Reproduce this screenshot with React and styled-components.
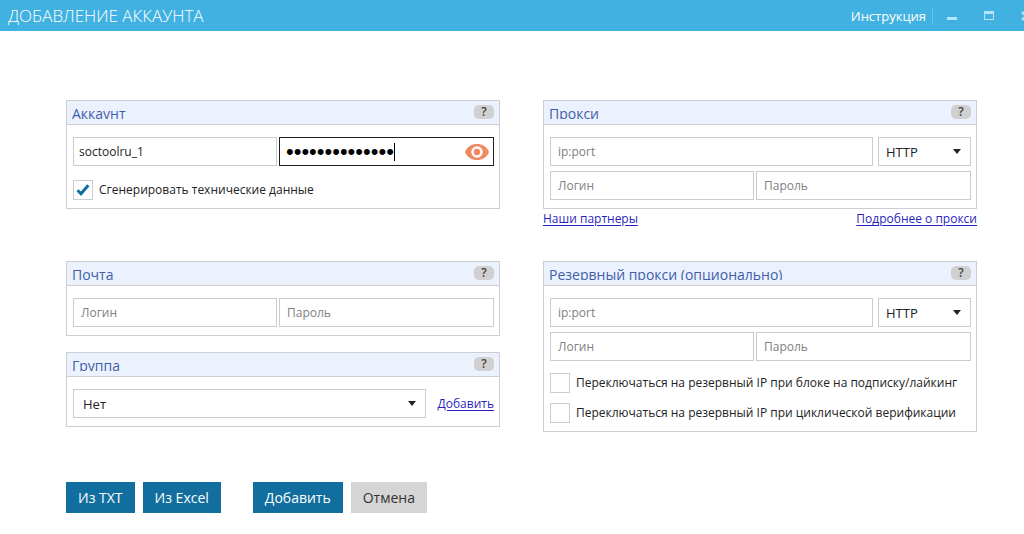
import React, { useState } from 'react'
import styled, { createGlobalStyle } from 'styled-components'

const GlobalStyle = createGlobalStyle`
  * {
    box-sizing: border-box;
  }

  body {
    margin: 0;
    background: #fff;
    color: #222;
    font-family: "Open Sans", "Noto Sans", sans-serif;
    font-size: 12px;
    line-height: 18px;
  }

  input, select, button {
    font: inherit;
    color: inherit;
  }
`

/* Window title bar */

const TitleBar = styled.header`
  display: flex;
  align-items: center;
  height: 31px;
  padding-left: 8px;
  overflow: hidden;
  background: #41b1e1;
  color: #fff;
`

const WindowTitle = styled.h1`
  flex: 1;
  margin: 0;
  font-size: 17px;
  font-weight: 300;
  line-height: 18px;
`

const HelpLink = styled.a`
  padding-right: 6px;
  border-right: 1px solid #6cc3e8;
  color: #fff;
  font-size: 13px;
  text-decoration: none;
`

const WindowButton = styled.button`
  display: flex;
  flex: none;
  justify-content: center;
  width: 37px;
  padding: 0;
  border: 0;
  background: none;
  color: #b5e4f7;

  &:last-child {
    margin-right: -20px;
  }
`

/* Page */

const Form = styled.form`
  padding: 69px 47px 20px 66px;
`

const Columns = styled.div`
  display: grid;
  grid-template-columns: repeat(2, minmax(0, 1fr));
  gap: 33px 43px;
  align-items: start;
`

const Stack = styled.div`
  display: flex;
  flex-direction: column;
  gap: ${props => props.$gap}px;
`

const PanelBox = styled.section`
  border: 1px solid #cdcdd2;
`

const PanelHeader = styled.div`
  display: flex;
  justify-content: space-between;
  align-items: flex-start;
  height: 24px;
  padding: 4px 5px;
  border-bottom: 1px solid #cdcdd2;
  background: #ebf2fe;
`

/* short box, the descenders are cut off */
const PanelTitle = styled.h2`
  height: 14px;
  margin: 0;
  overflow: hidden;
  color: #3f5ea8;
  font-size: 14px;
  font-weight: 400;
  line-height: 18px;
`

const HelpButton = styled.button`
  width: 20px;
  height: 14px;
  padding: 0;
  border: 0;
  border-radius: 5px;
  background: #d0d0d0;
  color: #444;
  font-weight: 600;
  line-height: 14px;
`

const PanelBody = styled.div`
  display: flex;
  flex-direction: column;
  gap: 5px;
  padding: 12px 5px 8px 6px;
`

const Row = styled.div`
  display: grid;
  grid-template-columns: ${props => props.$columns};
  gap: ${props => props.$gap || 2}px;
  align-items: center;
`

const TextInput = styled.input`
  width: 100%;
  min-width: 0;
  height: 29px;
  padding: 0 ${props => (props.$filled ? 5 : 7)}px;
  border: 1px solid #ccc;
  border-radius: 0;
  background: #fff;
  outline: 0;

  &::placeholder {
    color: #808080;
    opacity: 1;
  }
`

const PasswordBox = styled.div`
  display: flex;
  align-items: center;
  height: 29px;
  padding: 0 4px 0 6px;
  border: 1px solid #222;
`

/* the hidden value is set in a bigger size, for heavier dots */
const PasswordInput = styled.input`
  field-sizing: content;
  min-width: 8px;
  height: 22px;
  padding: 0;
  border: 0;
  outline: 0;
  background: none;
  color: #000;

  &[type="password"] {
    font-family: "Liberation Sans", sans-serif;
    font-size: 22px;
  }
`

const Caret = styled.span`
  width: 1px;
  height: 18px;
  background: #000;
`

const EyeButton = styled.button`
  display: flex;
  margin-left: auto;
  padding: 0;
  border: 0;
  background: none;
`

const SelectBox = styled.div`
  display: grid;
  align-items: center;

  > * {
    grid-area: 1 / 1;
  }

  svg {
    justify-self: end;
    margin-right: 10px;
    pointer-events: none;
  }
`

const SelectInput = styled.select`
  width: 100%;
  height: 29px;
  padding: 0 24px 0 ${props => props.$indent}px;
  border: 1px solid #ccc;
  border-radius: 0;
  appearance: none;
  background: #fff;
  font-size: 13px;
  outline: 0;
`

const Link = styled.a`
  color: #2a1fc0;
  text-decoration: underline;
  text-underline-offset: 2px;
`

const Links = styled.div`
  display: flex;
  justify-content: space-between;
`

const Checks = styled.div`
  display: flex;
  flex-direction: column;
  gap: 10px;
  padding-top: ${props => props.$top}px;
`

const CheckLabel = styled.label`
  display: flex;
  align-items: center;
  gap: 6px;
  height: 20px;
  white-space: nowrap;
`

const CheckBox = styled.span`
  display: grid;
  place-items: center;

  > * {
    grid-area: 1 / 1;
  }

  svg {
    pointer-events: none;
  }

  input {
    width: 20px;
    height: 20px;
    margin: 0;
    border: 1px solid #ccc;
    appearance: none;
    background: #fff;
  }
`

const Actions = styled.div`
  display: flex;
  gap: 8px;
  padding-top: 50px;
`

const ActionButton = styled.button`
  height: 31px;
  padding: 0 12px;
  border: 0;
  background: ${props => (props.$plain ? '#d5d5d5' : '#116e9e')};
  color: ${props => (props.$plain ? '#333' : '#fff')};
  font-size: 14px;

  &:nth-child(3) {
    margin-left: 24px;
  }
`

const Panel = ({ title, children }) => (
  <PanelBox>
    <PanelHeader>
      <PanelTitle>{title}</PanelTitle>
      <HelpButton type="button" aria-label={`Справка: ${title}`}>?</HelpButton>
    </PanelHeader>
    <PanelBody>{children}</PanelBody>
  </PanelBox>
)

const Select = ({ label, options, indent }) => (
  <SelectBox>
    <SelectInput aria-label={label} $indent={indent}>
      {options.map(option => <option key={option}>{option}</option>)}
    </SelectInput>
    <svg width="8" height="5" viewBox="0 0 8 5">
      <path d="M0 0h8L4 5z" fill="#222" />
    </svg>
  </SelectBox>
)

const Check = ({ label, defaultChecked = false }) => {
  const [checked, setChecked] = useState(defaultChecked)

  return (
    <CheckLabel>
      <CheckBox>
        <input type="checkbox" checked={checked} onChange={e => setChecked(e.target.checked)} />
        {checked && (
          <svg width="14" height="14" viewBox="0 0 14 14" fill="none" stroke="#116e9e" strokeWidth="3">
            <path d="M1.5 7.2 5 10.7 12.3 2.2" />
          </svg>
        )}
      </CheckBox>
      {label}
    </CheckLabel>
  )
}

const Login = () => (
  <Row $columns="204fr 215fr">
    <TextInput placeholder="Логин" aria-label="Логин" />
    <TextInput placeholder="Пароль" aria-label="Пароль" type="password" />
  </Row>
)

const ProxyFields = () => (
  <>
    <Row $columns="1fr 93px" $gap={5}>
      <TextInput placeholder="ip:port" aria-label="ip:port" />
      <Select label="Тип прокси" options={['HTTP', 'SOCKS5']} indent={7} />
    </Row>
    <Login />
  </>
)

export default function App() {
  const [password, setPassword] = useState('soctoolpass123')
  const [visible, setVisible] = useState(false)

  return (
    <>
      <GlobalStyle />
      <TitleBar>
        <WindowTitle>ДОБАВЛЕНИЕ АККАУНТА</WindowTitle>
        <HelpLink href="#help">Инструкция</HelpLink>
        <WindowButton type="button" aria-label="Свернуть">
          <svg width="10" height="10" viewBox="0 0 10 10">
            <path d="M0 6h10v3H0z" fill="currentColor" />
          </svg>
        </WindowButton>
        <WindowButton type="button" aria-label="Развернуть">
          <svg width="10" height="10" viewBox="0 0 10 10">
            <path d="M0 0h10v9H0zM1 3v5h8V3z" fill="currentColor" fillRule="evenodd" />
          </svg>
        </WindowButton>
        <WindowButton type="button" aria-label="Закрыть">
          <svg width="10" height="10" viewBox="0 0 10 10" stroke="currentColor" strokeWidth="2.5">
            <path d="M1 1l8 8M9 1l-8 8" />
          </svg>
        </WindowButton>
      </TitleBar>

      <Form onSubmit={e => e.preventDefault()}>
        <Columns>
          <Panel title="Аккаунт">
            <Row $columns="204fr 215fr">
              <TextInput $filled defaultValue="soctoolru_1" aria-label="Логин аккаунта" />
              <PasswordBox>
                <PasswordInput
                  type={visible ? 'text' : 'password'}
                  value={password}
                  onChange={e => setPassword(e.target.value)}
                  aria-label="Пароль аккаунта"
                />
                <Caret />
                <EyeButton type="button" aria-label="Показать пароль" onClick={() => setVisible(!visible)}>
                  <svg width="24" height="18" viewBox="0 0 24 18">
                    <path d="M0 9C2 3.500 7 1 12 1s10 2.500 12 8c-2 5.500-7 8-12 8S2 14.500 0 9z" fill="#f08a60" />
                    <circle cx="12" cy="9" r="4.500" fill="none" stroke="#fff" strokeWidth="2.500" />
                  </svg>
                </EyeButton>
              </PasswordBox>
            </Row>
            <Checks $top={9}>
              <Check label="Сгенерировать технические данные" defaultChecked />
            </Checks>
          </Panel>

          <Stack $gap={1}>
            <Panel title="Прокси">
              <ProxyFields />
            </Panel>
            <Links>
              <Link href="#partners">Наши партнеры</Link>
              <Link href="#proxy">Подробнее о прокси</Link>
            </Links>
          </Stack>

          <Stack $gap={16}>
            <Panel title="Почта">
              <Login />
            </Panel>
            <Panel title="Группа">
              <Row $columns="1fr auto" $gap={12}>
                <Select label="Группа" options={['Нет']} indent={9} />
                <Link href="#group">Добавить</Link>
              </Row>
            </Panel>
          </Stack>

          <Panel title="Резервный прокси (опционально)">
            <ProxyFields />
            <Checks $top={7}>
              <Check label="Переключаться на резервный IP при блоке на подписку/лайкинг" />
              <Check label="Переключаться на резервный IP при циклической верификации" />
            </Checks>
          </Panel>
        </Columns>

        <Actions>
          <ActionButton type="button">Из TXT</ActionButton>
          <ActionButton type="button">Из Excel</ActionButton>
          <ActionButton type="submit">Добавить</ActionButton>
          <ActionButton type="button" $plain>Отмена</ActionButton>
        </Actions>
      </Form>
    </>
  )
}
